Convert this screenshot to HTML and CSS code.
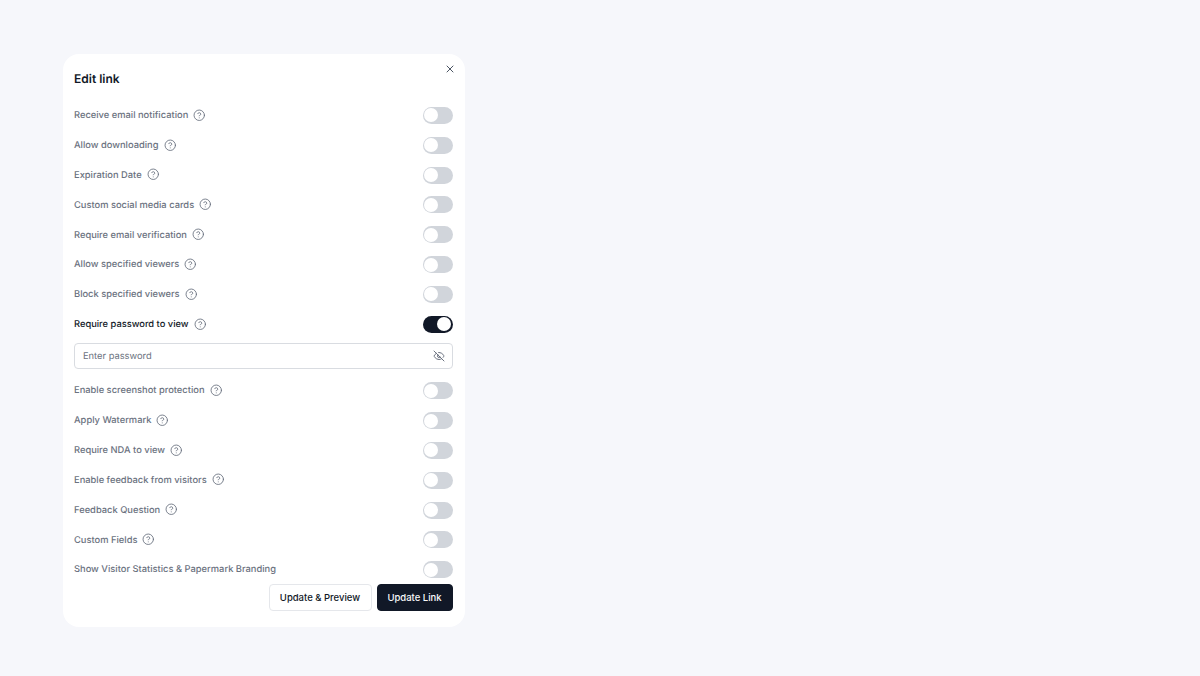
FILE: index.html
```html
<!DOCTYPE html>
<html lang="en">
<head>
  <meta charset="UTF-8">
  <meta name="viewport" content="width=device-width, initial-scale=1.0">
  <title>Edit link</title>
  <link rel="stylesheet" href="styles.css">
</head>
<body>
  <svg class="icon-defs" width="0" height="0">
    <symbol id="help" viewBox="0 0 24 24">
      <circle cx="12" cy="12" r="10"/>
      <path d="M9.1 9a3 3 0 0 1 5.8 1c0 2-3 3-3 3"/>
      <path d="M12 17h.01"/>
    </symbol>
  </svg>

  <div class="modal">
    <button class="close-btn" aria-label="Close">
      <svg viewBox="0 0 24 24"><path d="M18 6 6 18"/><path d="m6 6 12 12"/></svg>
    </button>
    <h2 class="modal-title">Edit link</h2>

    <div class="options">
      <div class="row"><span class="row-label">Receive email notification</span><svg class="help"><use href="#help"/></svg><span class="switch"></span></div>
      <div class="row"><span class="row-label">Allow downloading</span><svg class="help"><use href="#help"/></svg><span class="switch"></span></div>
      <div class="row"><span class="row-label">Expiration Date</span><svg class="help"><use href="#help"/></svg><span class="switch"></span></div>
      <div class="row"><span class="row-label">Custom social media cards</span><svg class="help"><use href="#help"/></svg><span class="switch"></span></div>
      <div class="row"><span class="row-label">Require email verification</span><svg class="help"><use href="#help"/></svg><span class="switch"></span></div>
      <div class="row"><span class="row-label">Allow specified viewers</span><svg class="help"><use href="#help"/></svg><span class="switch"></span></div>
      <div class="row"><span class="row-label">Block specified viewers</span><svg class="help"><use href="#help"/></svg><span class="switch"></span></div>
      <div class="row active"><span class="row-label">Require password to view</span><svg class="help"><use href="#help"/></svg><span class="switch on"></span></div>

      <div class="password-field">
        <span class="placeholder">Enter password</span>
        <svg class="eye-off" viewBox="0 0 24 24">
          <path d="M9.88 9.88a3 3 0 1 0 4.24 4.24"/>
          <path d="M10.73 5.08A10.43 10.43 0 0 1 12 5c7 0 10 7 10 7a13.16 13.16 0 0 1-1.67 2.68"/>
          <path d="M6.61 6.61A13.53 13.53 0 0 0 2 12s3 7 10 7a9.74 9.74 0 0 0 5.39-1.61"/>
          <path d="m2 2 20 20"/>
        </svg>
      </div>

      <div class="row"><span class="row-label">Enable screenshot protection</span><svg class="help"><use href="#help"/></svg><span class="switch"></span></div>
      <div class="row"><span class="row-label">Apply Watermark</span><svg class="help"><use href="#help"/></svg><span class="switch"></span></div>
      <div class="row"><span class="row-label">Require NDA to view</span><svg class="help"><use href="#help"/></svg><span class="switch"></span></div>
      <div class="row"><span class="row-label">Enable feedback from visitors</span><svg class="help"><use href="#help"/></svg><span class="switch"></span></div>
      <div class="row"><span class="row-label">Feedback Question</span><svg class="help"><use href="#help"/></svg><span class="switch"></span></div>
      <div class="row"><span class="row-label">Custom Fields</span><svg class="help"><use href="#help"/></svg><span class="switch"></span></div>
      <div class="row"><span class="row-label">Show Visitor Statistics &amp; Papermark Branding</span><span class="switch"></span></div>
    </div>

    <div class="modal-footer">
      <button class="btn btn-outline">Update &amp; Preview</button>
      <button class="btn btn-dark">Update Link</button>
    </div>
  </div>
</body>
</html>
```

FILE: styles.css
```css
body {
  margin: 0;
  padding: 54px 0 0 63px;
  background-color: #f6f7fb;
  font-family: Inter, "Liberation Sans", sans-serif;
  text-rendering: geometricPrecision;
}

.icon-defs {
  position: absolute;
}

.modal {
  position: relative;
  box-sizing: border-box;
  width: 402px;
  height: 573px;
  padding: 16px 12.5px 0 11px;
  background-color: #fff;
  border-radius: 16px;
}

.close-btn {
  position: absolute;
  top: 9px;
  right: 9.5px;
  width: 12px;
  height: 12px;
  padding: 0;
  background: none;
  border: 0;
}

.close-btn svg {
  display: block;
  width: 12px;
  height: 12px;
  fill: none;
  stroke: #4b5563;
  stroke-width: 2;
  stroke-linecap: round;
}

.modal-title {
  margin: 0 0 14px;
  padding-top: 0.5px;
  height: 15.5px;
  font-size: 12px;
  line-height: 16px;
  font-weight: 600;
  color: #111827;
}

.row {
  display: flex;
  align-items: center;
  gap: 5px;
  height: 29.85px;
}

.row-label {
  padding-top: 1.5px;
  font-size: 9.33px;
  font-weight: 500;
  color: #6b7280;
}

.row.active .row-label {
  color: #111827;
}

.help {
  width: 12.5px;
  height: 12.5px;
  fill: none;
  stroke: #6b7280;
  stroke-width: 1.7;
  stroke-linecap: round;
  stroke-linejoin: round;
}

.switch {
  position: relative;
  width: 30px;
  height: 17px;
  margin-top: 1px;
  margin-left: auto;
  background-color: #d1d5db;
  border-radius: 9px;
}

.switch::after {
  content: "";
  position: absolute;
  top: 1.5px;
  left: 1.5px;
  width: 14px;
  height: 14px;
  background-color: #fff;
  border-radius: 50%;
}

.switch.on {
  background-color: #111827;
}

.switch.on::after {
  left: 14.5px;
}

.password-field {
  display: flex;
  align-items: center;
  justify-content: space-between;
  box-sizing: border-box;
  height: 26px;
  margin: 4px 0 6.5px;
  padding: 0 7px 0 8px;
  border: 1px solid #d9dce1;
  border-radius: 4px;
}

.placeholder {
  padding-top: 1px;
  font-size: 9.33px;
  color: #6b7280;
}

.eye-off {
  width: 12px;
  height: 12px;
  fill: none;
  stroke: #6b7280;
  stroke-width: 2;
  stroke-linecap: round;
  stroke-linejoin: round;
}

.modal-footer {
  display: flex;
  justify-content: flex-end;
  gap: 5px;
  margin-top: -0.5px;
}

.btn {
  box-sizing: border-box;
  height: 27px;
  padding: 0;
  font-family: inherit;
  font-size: 9.5px;
  font-weight: 500;
  border-radius: 4px;
}

.btn-outline {
  width: 103px;
  color: #111827;
  background-color: #fff;
  border: 1px solid #e5e7eb;
}

.btn-dark {
  width: 76px;
  color: #f9fafb;
  background-color: #111827;
  border: 1px solid #111827;
}
```
